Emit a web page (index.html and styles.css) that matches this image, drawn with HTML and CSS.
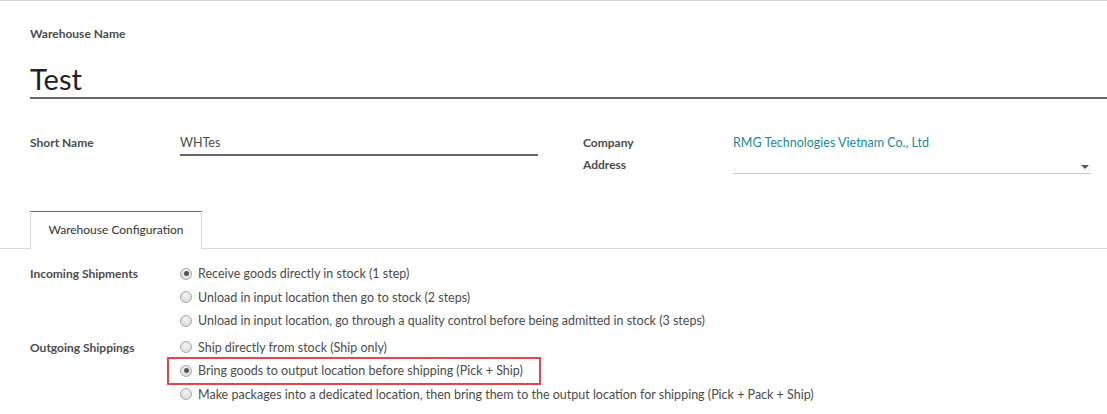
FILE: index.html
```html
<!DOCTYPE html>
<html>
<head>
<meta charset="utf-8">
<link rel="stylesheet" href="styles.css">
</head>
<body>
<div class="sheet">
  <div class="title-block">
    <div class="title-label">Warehouse Name</div>
    <div class="title">Test</div>
  </div>
  <div class="group">
    <div class="col">
      <div class="row">
        <div class="lbl">Short Name</div>
        <div class="field field-input">WHTes</div>
      </div>
    </div>
    <div class="col">
      <div class="row">
        <div class="lbl">Company</div>
        <div class="field link">RMG Technologies Vietnam Co., Ltd</div>
      </div>
      <div class="row">
        <div class="lbl">Address</div>
        <div class="field field-select"><span class="caret"></span></div>
      </div>
    </div>
  </div>
</div>
<div class="tabs">
  <div class="tab">Warehouse Configuration</div>
</div>
<div class="config">
  <div class="cfg-row">
    <div class="lbl">Incoming Shipments</div>
    <div class="options">
      <div class="opt"><span class="radio checked"></span>Receive goods directly in stock (1 step)</div>
      <div class="opt"><span class="radio"></span>Unload in input location then go to stock (2 steps)</div>
      <div class="opt"><span class="radio"></span>Unload in input location, go through a quality control before being admitted in stock (3 steps)</div>
    </div>
  </div>
  <div class="cfg-row">
    <div class="lbl">Outgoing Shippings</div>
    <div class="options">
      <div class="opt"><span class="radio"></span>Ship directly from stock (Ship only)</div>
      <div class="opt highlight"><span class="radio checked"></span>Bring goods to output location before shipping (Pick + Ship)</div>
      <div class="opt"><span class="radio"></span>Make packages into a dedicated location, then bring them to the output location for shipping (Pick + Pack + Ship)</div>
    </div>
  </div>
</div>
</body>
</html>
```

FILE: styles.css
```css
* { box-sizing: border-box; }
html, body { margin: 0; padding: 0; background: #fff; }
body {
  font-family: Lato, "Open Sans", sans-serif;
  font-size: 12.5px;
  color: #4c4c4c;
  border-top: 1px solid #d6d6d6;
  overflow: hidden;
}
.sheet { padding-left: 30px; }
.title-block { padding-top: 25px; }
.title-label { font-weight: bold; font-size: 12px; line-height: 16px; color: #4c4c4c; }
.title {
  margin-top: 17px;
  font-size: 29px;
  line-height: 36px;
  color: #222;
  border-bottom: 2px solid #666;
  height: 40px;
  padding-top: 2px;
}
.group {
  display: flex;
  gap: 45px;
  padding-top: 33px;
}
.col { width: 508px; display: flex; flex-direction: column; }
.row { display: flex; align-items: flex-start; }
.lbl { width: 150px; flex: none; font-weight: bold; font-size: 12px; line-height: 22px; color: #4c4c4c; }
.field { width: 358px; line-height: 22px; }
.field-input { border-bottom: 2px solid #666; height: 24px; color: #4c4c4c; }
.link { color: #1c8a98; }
.field-select {
  position: relative;
  height: 20px;
  border-bottom: 1px solid #ccc;
}
.caret {
  position: absolute;
  right: 2px;
  top: 11px;
  width: 0; height: 0;
  border-left: 4px solid transparent;
  border-right: 4px solid transparent;
  border-top: 4px solid #555;
}
.tabs {
  margin-top: 35px;
  border-bottom: 1px solid #d9d9d9;
  padding-left: 30px;
  height: 38px;
}
.tab {
  width: 172px;
  height: 38px;
  border: 1px solid #d9d9d9;
  border-top: 1px solid #875a7b;
  border-bottom: 1px solid #fff;
  background: #fff;
  text-align: center;
  line-height: 36px;
  color: #333;
  font-size: 12px;
}
.config { padding: 13px 0 0 30px; }
.cfg-row { display: flex; margin-bottom: 3px; }
.cfg-row .lbl { line-height: 23.5px; }
.options { display: flex; flex-direction: column; }
.opt {
  display: flex;
  align-items: center;
  height: 23.5px;
  color: #4c4c4c;
  white-space: nowrap;
  width: max-content;
}
.radio {
  width: 12px; height: 12px;
  border-radius: 50%;
  border: 1px solid #a9a9a9;
  background: radial-gradient(circle at 50% 35%, #f4f4f4, #d6d6d6);
  margin-right: 6px;
  position: relative;
  flex: none;
}
.radio.checked::after {
  content: "";
  position: absolute;
  left: 2.5px; top: 2.5px;
  width: 5px; height: 5px;
  border-radius: 50%;
  background: #555;
}
.highlight {
  outline: 2px solid #f04148;
  outline-offset: 0;
  margin-left: -11px;
  padding-left: 11px;
  padding-right: 16px;
}
```
